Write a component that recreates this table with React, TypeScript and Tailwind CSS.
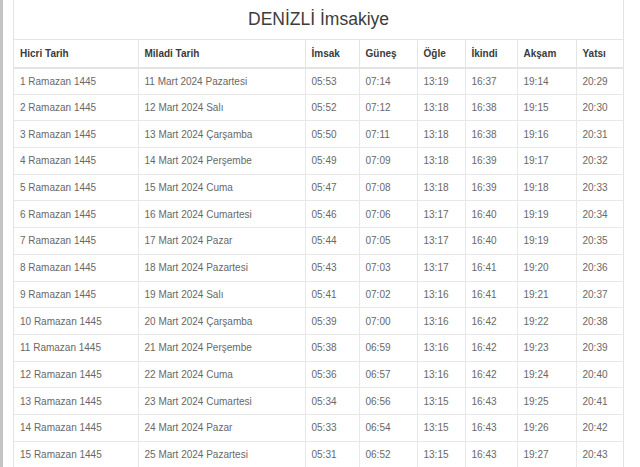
import React from "react";

const rows: string[][] = [
  ["1 Ramazan 1445", "11 Mart 2024 Pazartesi", "05:53", "07:14", "13:19", "16:37", "19:14", "20:29"],
  ["2 Ramazan 1445", "12 Mart 2024 Salı", "05:52", "07:12", "13:18", "16:38", "19:15", "20:30"],
  ["3 Ramazan 1445", "13 Mart 2024 Çarşamba", "05:50", "07:11", "13:18", "16:38", "19:16", "20:31"],
  ["4 Ramazan 1445", "14 Mart 2024 Perşembe", "05:49", "07:09", "13:18", "16:39", "19:17", "20:32"],
  ["5 Ramazan 1445", "15 Mart 2024 Cuma", "05:47", "07:08", "13:18", "16:39", "19:18", "20:33"],
  ["6 Ramazan 1445", "16 Mart 2024 Cumartesi", "05:46", "07:06", "13:17", "16:40", "19:19", "20:34"],
  ["7 Ramazan 1445", "17 Mart 2024 Pazar", "05:44", "07:05", "13:17", "16:40", "19:19", "20:35"],
  ["8 Ramazan 1445", "18 Mart 2024 Pazartesi", "05:43", "07:03", "13:17", "16:41", "19:20", "20:36"],
  ["9 Ramazan 1445", "19 Mart 2024 Salı", "05:41", "07:02", "13:16", "16:41", "19:21", "20:37"],
  ["10 Ramazan 1445", "20 Mart 2024 Çarşamba", "05:39", "07:00", "13:16", "16:42", "19:22", "20:38"],
  ["11 Ramazan 1445", "21 Mart 2024 Perşembe", "05:38", "06:59", "13:16", "16:42", "19:23", "20:39"],
  ["12 Ramazan 1445", "22 Mart 2024 Cuma", "05:36", "06:57", "13:16", "16:42", "19:24", "20:40"],
  ["13 Ramazan 1445", "23 Mart 2024 Cumartesi", "05:34", "06:56", "13:15", "16:43", "19:25", "20:41"],
  ["14 Ramazan 1445", "24 Mart 2024 Pazar", "05:33", "06:54", "13:15", "16:43", "19:26", "20:42"],
  ["15 Ramazan 1445", "25 Mart 2024 Pazartesi", "05:31", "06:52", "13:15", "16:43", "19:27", "20:43"],
];

const headers = ["Hicri Tarih", "Miladi Tarih", "İmsak", "Güneş", "Öğle", "İkindi", "Akşam", "Yatsı"];
const widths = [124, 167, 54, 58, 48, 52, 59, 48];

export default function App() {
  return (
    <div
      className="w-[640px] h-[467px] overflow-hidden bg-white flex"
      style={{ fontFamily: '"Liberation Sans", Arial, sans-serif' }}
    >
      <div className="w-[3px] h-full bg-[#c4c4c4] shrink-0" />
      <div className="w-[10px] h-full bg-white shrink-0" />
      <div className="w-[611px] h-full border-x border-[#e2e2e2] flex flex-col shrink-0">
        <div className="h-[39px] shrink-0 flex items-center justify-center text-[17.5px] text-[#3c3c3c] pb-[1px]">
          DENİZLİ İmsakiye
        </div>
        <table className="border-collapse table-fixed w-[610px] shrink-0">
          <colgroup>
            {widths.map((w, i) => (
              <col key={i} style={{ width: w }} />
            ))}
          </colgroup>
          <thead>
            <tr className="h-[28px]">
              {headers.map((h, i) => (
                <th
                  key={i}
                  className={`text-left font-bold text-[10px] text-[#3a3a3a] px-[6px] border-t border-b-2 border-[#e4e4e4] ${i > 0 ? "border-l" : ""}`}
                >
                  {h}
                </th>
              ))}
            </tr>
          </thead>
          <tbody>
            {rows.map((r, ri) => (
              <tr key={ri} className="h-[26.7px]">
                {r.map((c, ci) => (
                  <td
                    key={ci}
                    className={`text-[10px] text-[#686868] px-[6px] border-b border-[#e8e8e8] whitespace-nowrap ${ci > 0 ? "border-l" : ""}`}
                  >
                    {c}
                  </td>
                ))}
              </tr>
            ))}
          </tbody>
        </table>
      </div>
    </div>
  );
}
